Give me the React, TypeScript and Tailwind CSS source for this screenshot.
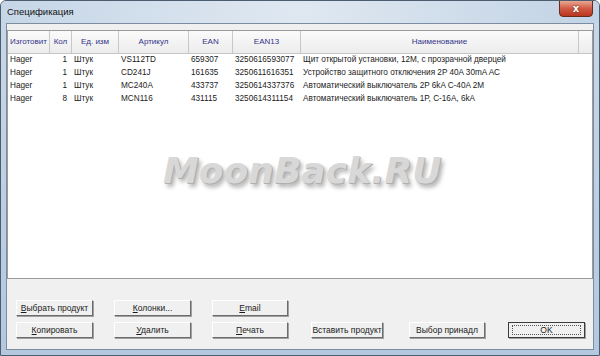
import React from "react";

const cols = [
  { w: 42, label: "Изготовит" },
  { w: 22, label: "Кол" },
  { w: 47, label: "Ед. изм" },
  { w: 70, label: "Артикул" },
  { w: 44, label: "EAN" },
  { w: 68, label: "EAN13" },
  { w: 278, label: "Наименование" },
];

const rows = [
  ["Hager", "1", "Штук", "VS112TD", "659307", "3250616593077", "Щит открытой установки, 12М, с прозрачной дверцей"],
  ["Hager", "1", "Штук", "CD241J", "161635", "3250611616351", "Устройство защитного отключения 2P 40A 30mA AC"],
  ["Hager", "1", "Штук", "MC240A", "433737", "3250614337376", "Автоматический выключатель 2P 6kA C-40A 2M"],
  ["Hager", "8", "Штук", "MCN116", "431115", "3250614311154", "Автоматический выключатель 1P, C-16A, 6kA"],
];

function Btn({ children, w = 77, isDefault = false }: { children: React.ReactNode; w?: number; isDefault?: boolean }) {
  return (
    <div
      className={`h-[16px] flex items-center justify-center bg-[#f0f0f0] border ${
        isDefault ? "border-[#3c3c3c]" : "border-t-[#ffffff] border-l-[#ffffff] border-r-[#6b6b6b] border-b-[#6b6b6b]"
      } shadow-[1px_1px_0_#a0a0a0] text-[8.5px] text-[#1a1a1a] leading-none`}
      style={{ width: w }}
    >
      {isDefault ? (
        <div className="w-[calc(100%-6px)] h-[10px] border border-dotted border-[#555] flex items-center justify-center">
          {children}
        </div>
      ) : (
        children
      )}
    </div>
  );
}

export default function App() {
  return (
    <div
      className="relative w-[600px] h-[356px] overflow-hidden flex flex-col bg-gradient-to-b from-[#c9d8e8] to-[#b3c8de] border border-[#4d5d70] rounded-t-[6px]"
      style={{ fontFamily: '"Liberation Sans", Arial, sans-serif' }}
    >
      {/* Title bar */}
      <div className="relative h-[22px] flex items-center pl-[6px] bg-gradient-to-r from-[#c6d6e7] via-[#dfe8f1] to-[#c2d3e5] shrink-0">
        <span className="text-[9.5px] text-[#111] mt-[1px]">Спецификация</span>
        <div className="absolute right-[6px] top-[-1px] w-[34px] h-[17px] rounded-b-[4px] border border-[#6a2a1c] bg-gradient-to-b from-[#e7a694] via-[#d05a43] to-[#b93420] flex items-center justify-center">
          <span className="text-white text-[10px] font-bold leading-none [text-shadow:0_0_2px_#5a1a10]" style={{ fontFamily: '"DejaVu Sans", sans-serif' }}>
            x
          </span>
        </div>
      </div>

      {/* Client area */}
      <div className="flex-1 mx-[5px] mb-[6px] bg-[#f0f0f0] border border-[#7d8da1] flex flex-col pt-[6px] pb-[11px]">
        {/* List */}
        <div className="h-[249px] bg-white border border-[#9b9b9b] flex flex-col shrink-0">
          <div className="flex h-[23px] shrink-0 bg-gradient-to-b from-[#fbfbfb] to-[#ececec] border-b border-[#c6c6c6]">
            {cols.map((c, i) => (
              <div
                key={i}
                className="h-full flex items-center justify-center border-r border-[#c8c8c8] text-[8px] text-[#33338a] overflow-hidden whitespace-nowrap"
                style={{ width: c.w }}
              >
                {c.label}
              </div>
            ))}
          </div>
          {rows.map((r, ri) => (
            <div key={ri} className="flex h-[13px] items-center text-[8.2px] text-[#1a1a1a] whitespace-nowrap">
              {r.map((v, ci) => (
                <div
                  key={ci}
                  className={`overflow-hidden ${ci === 1 ? "text-right pr-[5px]" : "pl-[2px]"}`}
                  style={{ width: cols[ci].w }}
                >
                  {v}
                </div>
              ))}
            </div>
          ))}
        </div>

        {/* Buttons */}
        <div className="mt-[21px] flex flex-col gap-[6px] pl-[9px]">
          <div className="flex gap-[21px]">
            <Btn><span><u>В</u>ыбрать продукт</span></Btn>
            <Btn><span><u>К</u>олонки...</span></Btn>
            <Btn w={76}><span><u>E</u>mail</span></Btn>
          </div>
          <div className="flex">
            <Btn><span><u>К</u>опировать</span></Btn>
            <div className="ml-[21px]"><Btn><span><u>У</u>далить</span></Btn></div>
            <div className="ml-[21px]"><Btn w={76}><span><u>П</u>ечать</span></Btn></div>
            <div className="ml-[23px]"><Btn w={72}>Вставить продукт</Btn></div>
            <div className="ml-[26px]"><Btn w={76}>Выбор принадл</Btn></div>
            <div className="ml-[23px]"><Btn isDefault>OK</Btn></div>
          </div>
        </div>
      </div>

      {/* Watermark */}
      <div
        className="absolute left-[162px] top-[152px] text-[36px] font-bold italic text-[#d8d8d8] leading-none [text-shadow:1px_1px_0_#b0b0b0,3px_4px_4px_rgba(0,0,0,0.3)] pointer-events-none"
        style={{ fontFamily: '"DejaVu Sans", sans-serif' }}
      >
        MoonBack.RU
      </div>
    </div>
  );
}
